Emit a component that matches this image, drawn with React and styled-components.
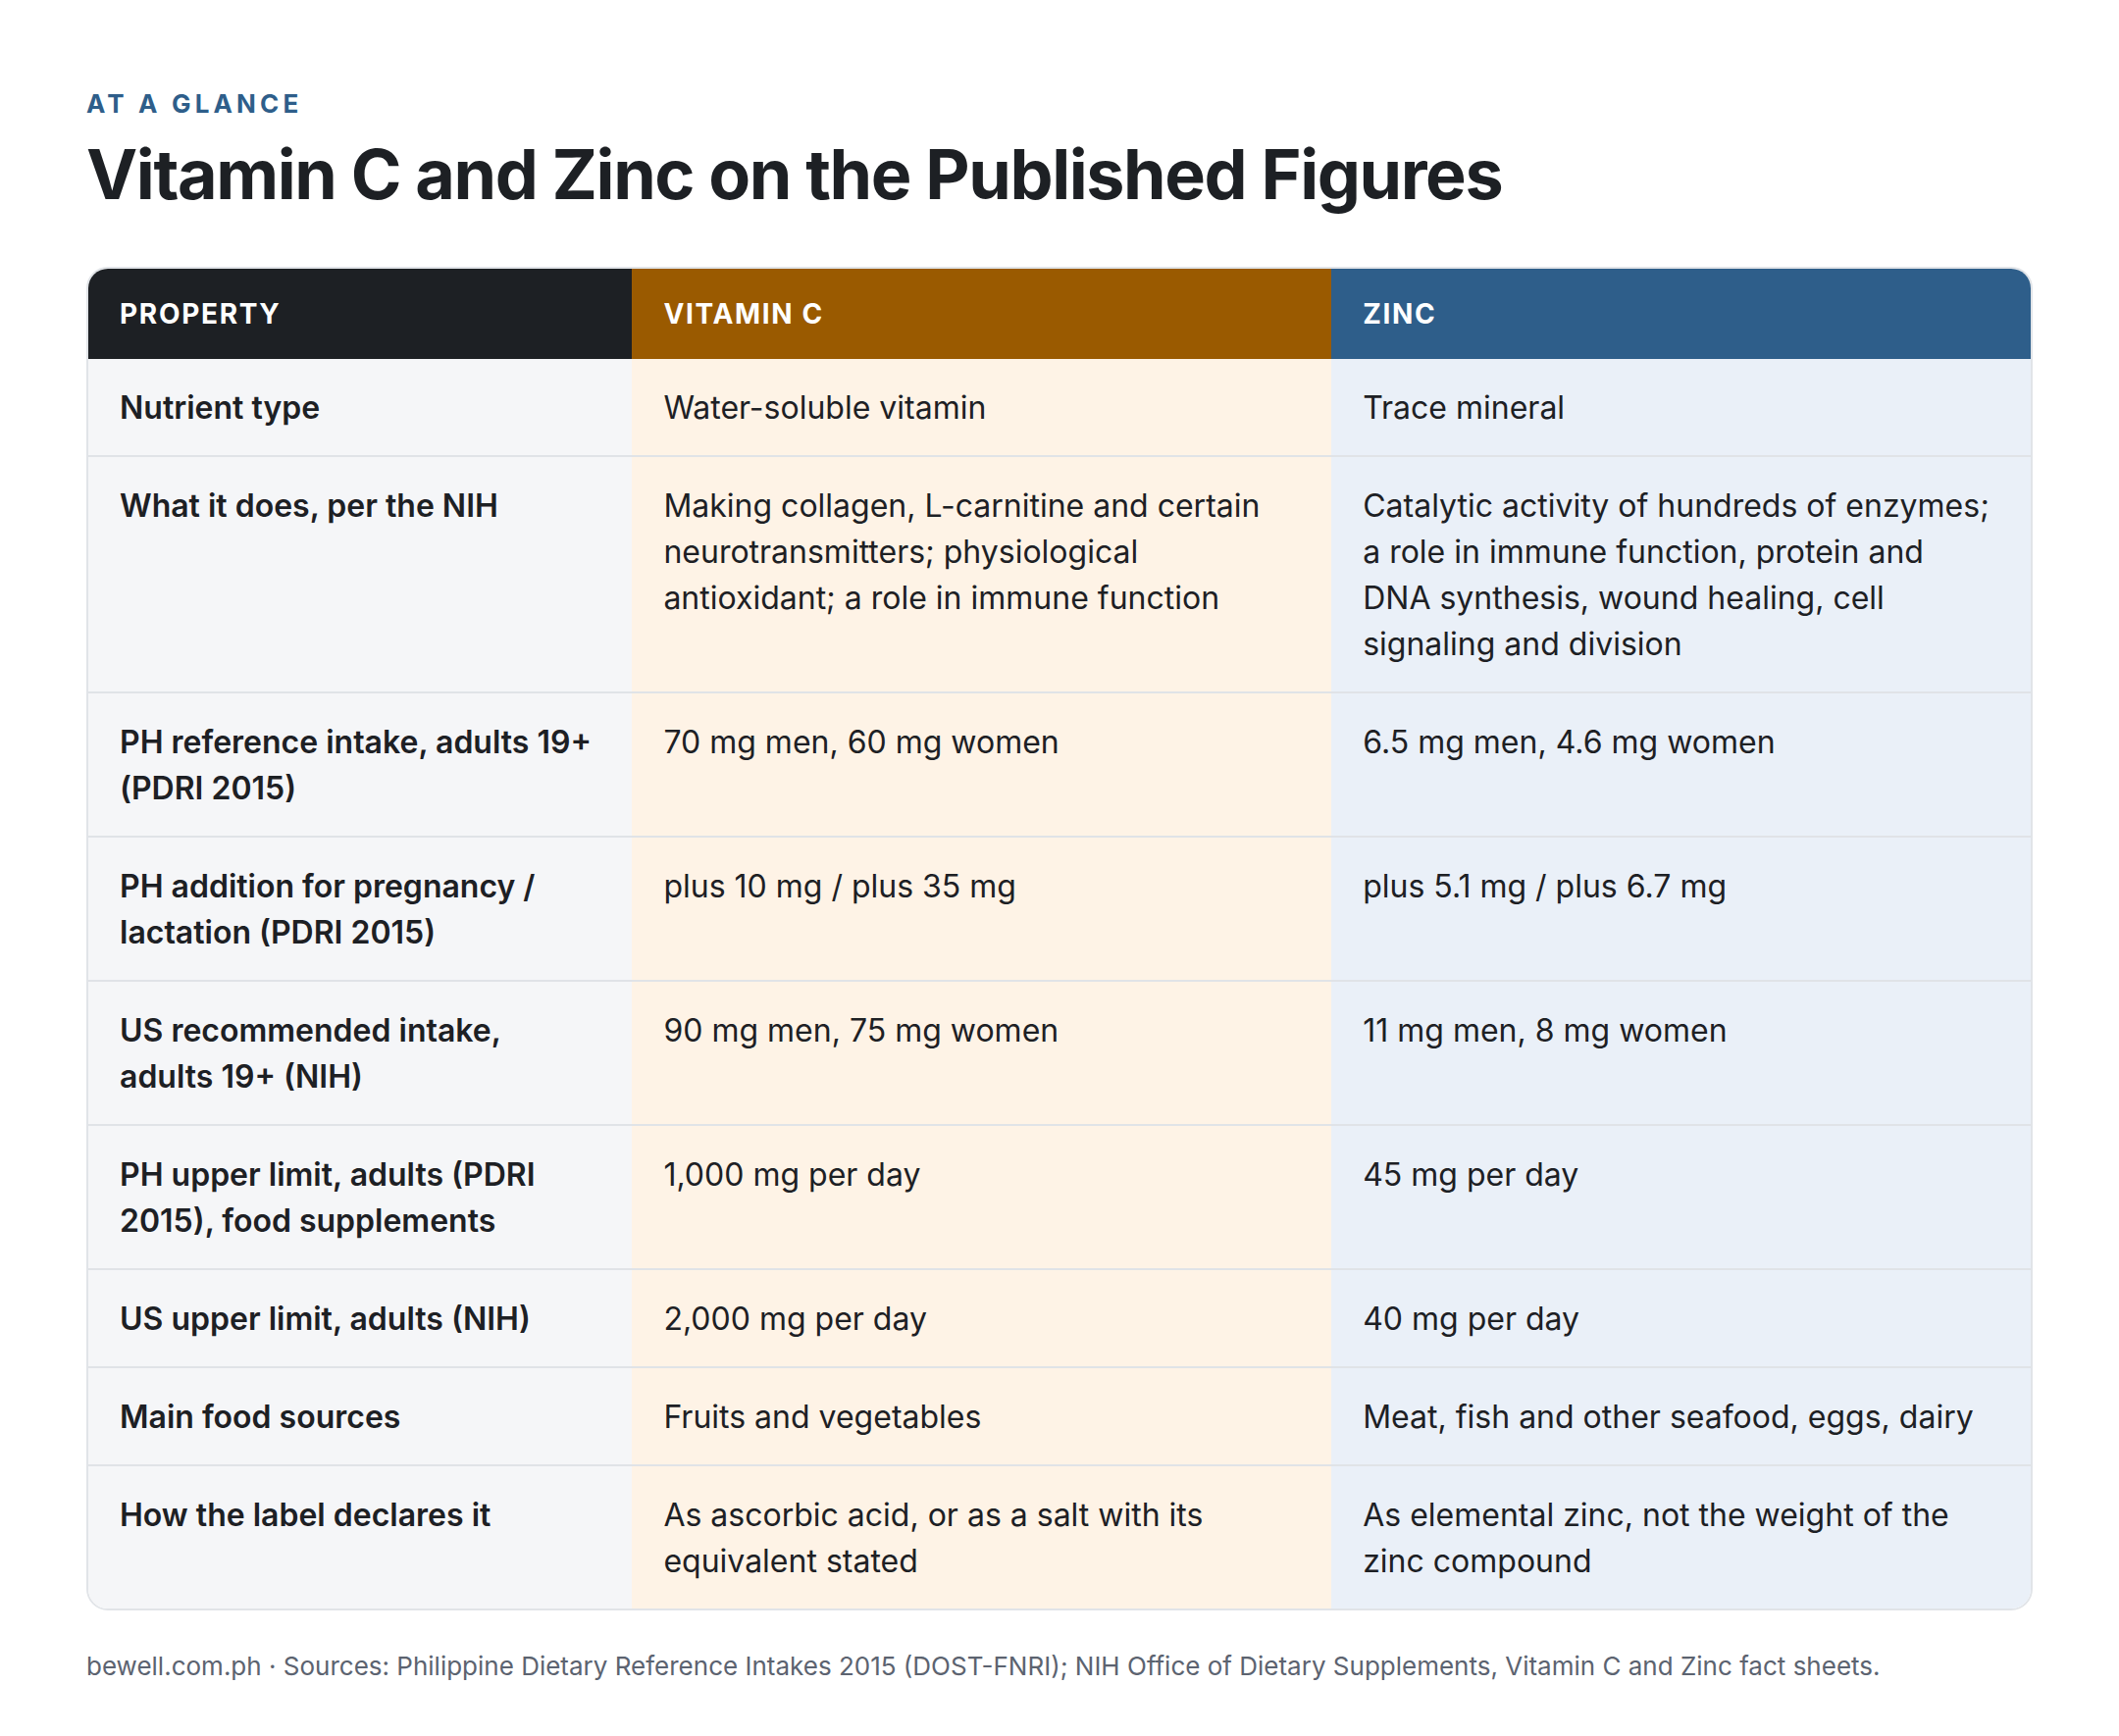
import styled, { createGlobalStyle } from "styled-components";

const GlobalStyle = createGlobalStyle`
  html, body {
    margin: 0;
    padding: 0;
    background: #ffffff;
  }
  body {
    font-family: Inter, "Noto Sans", "Liberation Sans", sans-serif;
    color: #1d2024;
  }
`;

// Data for the comparison table
const rows = [
  ["Nutrient type", "Water-soluble vitamin", "Trace mineral"],
  [
    "What it does, per the NIH",
    "Making collagen, L-carnitine and certain neurotransmitters; physiological antioxidant; a role in immune function",
    "Catalytic activity of hundreds of enzymes; a role in immune function, protein and DNA synthesis, wound healing, cell signaling and division",
  ],
  ["PH reference intake, adults 19+ (PDRI 2015)", "70 mg men, 60 mg women", "6.5 mg men, 4.6 mg women"],
  ["PH addition for pregnancy / lactation (PDRI 2015)", "plus 10 mg / plus 35 mg", "plus 5.1 mg / plus 6.7 mg"],
  ["US recommended intake, adults 19+ (NIH)", "90 mg men, 75 mg women", "11 mg men, 8 mg women"],
  ["PH upper limit, adults (PDRI 2015), food supplements", "1,000 mg per day", "45 mg per day"],
  ["US upper limit, adults (NIH)", "2,000 mg per day", "40 mg per day"],
  ["Main food sources", "Fruits and vegetables", "Meat, fish and other seafood, eggs, dairy"],
  ["How the label declares it", "As ascorbic acid, or as a salt with its equivalent stated", "As elemental zinc, not the weight of the zinc compound"],
];

const headBg = { property: "#1d2024", vitc: "#9a5a00", zinc: "#2e5e8a" };
const cellBg = { property: "#f5f6f8", vitc: "#fef3e6", zinc: "#eaf0f8" };
const kinds = ["property", "vitc", "zinc"];

export default function App() {
  return (
    <Page>
      <GlobalStyle />
      <Eyebrow>At a glance</Eyebrow>
      <Title>Vitamin C and Zinc on the Published Figures</Title>
      <Table>
        <HeadRow>
          <HeadCell $kind="property">Property</HeadCell>
          <HeadCell $kind="vitc">Vitamin C</HeadCell>
          <HeadCell $kind="zinc">Zinc</HeadCell>
        </HeadRow>
        {rows.map((row, i) => (
          <Row key={i} $first={i === 0}>
            {row.map((text, j) => (
              <Cell key={j} $kind={kinds[j]}>
                {text}
              </Cell>
            ))}
          </Row>
        ))}
      </Table>
      <Footer>
        bewell.com.ph · Sources: Philippine Dietary Reference Intakes 2015 (DOST-FNRI); NIH Office of Dietary Supplements, Vitamin C and Zinc fact sheets.
      </Footer>
    </Page>
  );
}

const Page = styled.div`
  padding: 90px 88px 60px;
  display: flex;
  flex-direction: column;
`;

const Eyebrow = styled.div`
  font-size: 26px;
  line-height: 31px;
  font-weight: 700;
  letter-spacing: 0.16em;
  text-transform: uppercase;
  color: #2e5e8a;
`;

const Title = styled.h1`
  margin: 18px 0 0;
  font-size: 70px;
  line-height: 78px;
  font-weight: 700;
  letter-spacing: -0.02em;
  color: #1d2024;
`;

const Table = styled.div`
  margin-top: 55px;
  border: 2px solid #e1e4e8;
  border-radius: 22px;
  overflow: hidden;
`;

const HeadRow = styled.div`
  display: grid;
  grid-template-columns: 28% 36% 36%;
`;

const HeadCell = styled.div`
  background: ${(p) => headBg[p.$kind]};
  color: #ffffff;
  padding: 26px 32px;
  font-size: 28px;
  line-height: 40px;
  font-weight: 700;
  letter-spacing: 0.06em;
  text-transform: uppercase;
`;

const Row = styled.div`
  display: grid;
  grid-template-columns: 28% 36% 36%;
  border-top: ${(p) => (p.$first ? "none" : "2px solid #e0e3e7")};
`;

const Cell = styled.div`
  background: ${(p) => cellBg[p.$kind]};
  padding: 26px 32px 25px;
  font-size: 32px;
  line-height: 47px;
  font-weight: ${(p) => (p.$kind === "property" ? 600 : 400)};
  color: #1d2024;
`;

const Footer = styled.p`
  margin: 39px 0 0;
  font-size: 26px;
  line-height: 36px;
  color: #5c6370;
`;
